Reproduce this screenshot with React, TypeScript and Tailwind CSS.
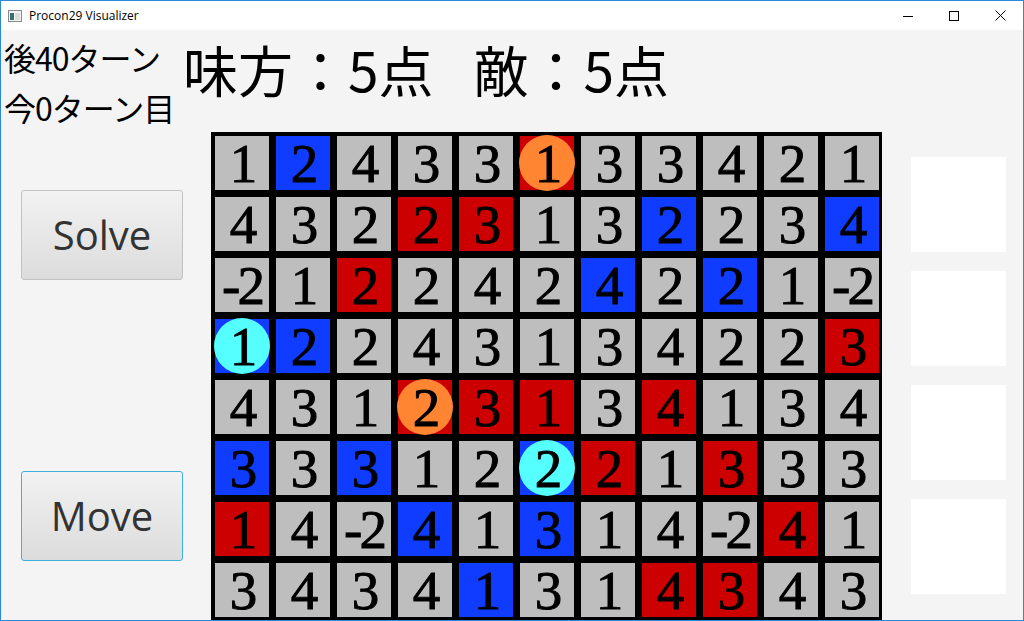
import React from "react";

const rows = [
  "1g 2b 4g 3g 3g 1r:o 3g 3g 4g 2g 1g",
  "4g 3g 2g 2r 3r 1g 3g 2b 2g 3g 4b",
  "-2g 1g 2r 2g 4g 2g 4b 2g 2b 1g -2g",
  "1b:c 2b 2g 4g 3g 1g 3g 4g 2g 2g 3r",
  "4g 3g 1g 2r:o 3r 1r 3g 4r 1g 3g 4g",
  "3b 3g 3b 1g 2g 2b:c 2r 1g 3r 3g 3g",
  "1r 4g -2g 4b 1g 3b 1g 4g -2g 4r 1g",
  "3g 4g 3g 4g 1b 3g 1g 4r 3r 4g 3g",
];

type Cell = { v: string; c: string; agent?: string };

const grid: Cell[][] = rows.map((r) =>
  r.split(" ").map((tok) => {
    const [main, agent] = tok.split(":");
    return { v: main.slice(0, -1), c: main.slice(-1), agent };
  })
);

function CellView({ cell }: { cell: Cell }) {
  const bg =
    cell.c === "b" ? "bg-[#0f3cff]" : cell.c === "r" ? "bg-[#cc0000]" : "bg-[#bebebe]";
  return (
    <div className={`relative w-[54px] h-[54px] ${bg} flex items-center justify-center`}>
      {cell.agent === "o" && (
        <div className="absolute -inset-px rounded-full bg-[#ff8533]" />
      )}
      {cell.agent === "c" && (
        <div className="absolute -inset-px rounded-full bg-[#55ffff]" />
      )}
      <span
        className="relative text-black text-[55px] leading-none tracking-[-3px] [-webkit-text-stroke:0.9px_black]"
        style={{ fontFamily: '"Liberation Serif", "DejaVu Serif", serif' }}
      >
        {cell.v}
      </span>
    </div>
  );
}

export default function App() {
  return (
    <div
      className="w-[1024px] h-[621px] bg-[#f4f4f4] border border-[#2a8ad8] overflow-hidden flex flex-col box-border"
      style={{ fontFamily: '"Noto Sans", "Noto Sans CJK JP", sans-serif' }}
    >
      {/* Title bar */}
      <div className="h-[29px] bg-white flex items-center shrink-0">
        <svg width="14" height="12" viewBox="0 0 14 12" className="ml-[7px] mt-[1px]">
          <rect x="0.5" y="0.5" width="13" height="11" fill="#f2f2f2" stroke="#8a8a8a" />
          <rect x="2" y="3" width="4" height="7" fill="#3c6e6a" />
          <rect x="7" y="3" width="5" height="7" fill="#dcdcdc" />
        </svg>
        <span
          className="ml-[7px] text-[12px] text-black"
          style={{ fontFamily: '"Open Sans", "Noto Sans", sans-serif' }}
        >
          Procon29 Visualizer
        </span>
        <div className="ml-auto flex items-center h-full">
          <div className="w-[46px] h-full flex items-center justify-center">
            <svg width="10" height="10" viewBox="0 0 10 10">
              <line x1="0" y1="5.5" x2="10" y2="5.5" stroke="#000" strokeWidth="1" />
            </svg>
          </div>
          <div className="w-[46px] h-full flex items-center justify-center">
            <svg width="10" height="10" viewBox="0 0 10 10">
              <rect x="0.5" y="0.5" width="9" height="9" fill="none" stroke="#000" strokeWidth="1" />
            </svg>
          </div>
          <div className="w-[46px] h-full flex items-center justify-center">
            <svg width="11" height="11" viewBox="0 0 11 11">
              <line x1="0.5" y1="0.5" x2="10.5" y2="10.5" stroke="#000" strokeWidth="1" />
              <line x1="10.5" y1="0.5" x2="0.5" y2="10.5" stroke="#000" strokeWidth="1" />
            </svg>
          </div>
        </div>
      </div>

      {/* Top text row */}
      <div className="h-[102px] flex shrink-0">
        <div
          className="w-[182px] pl-[3px] pt-[2px] text-[32px] leading-[50px] tracking-[-1px] text-black whitespace-nowrap"
          style={{ fontFamily: '"Noto Sans CJK JP", sans-serif' }}
        >
          <div>後40ターン</div>
          <div>今0ターン目</div>
        </div>
        <div
          className="pt-[8px] flex gap-[40px] text-[55px] leading-[60px] text-black whitespace-nowrap"
          style={{ fontFamily: '"Noto Sans CJK JP", sans-serif' }}
        >
          <span>味方：5点</span>
          <span>敵：5点</span>
        </div>
      </div>

      {/* Main row */}
      <div className="flex flex-1">
        <div className="w-[210px] pl-[20px] flex flex-col shrink-0">
          <button
            className="mt-[58px] w-[162px] h-[90px] rounded-[3px] border border-[#c2c2c2] bg-gradient-to-b from-[#f2f2f2] to-[#dcdcdc] text-[#333333] text-[40px] leading-none"
            style={{ fontFamily: '"Open Sans", "Noto Sans", sans-serif' }}
          >
            Solve
          </button>
          <button
            className="mt-[191px] w-[162px] h-[90px] rounded-[3px] border border-[#3fb0e0] bg-gradient-to-b from-[#f2f2f2] to-[#dcdcdc] text-[#333333] text-[40px] leading-none"
            style={{ fontFamily: '"Open Sans", "Noto Sans", sans-serif' }}
          >
            Move
          </button>
        </div>

        <div className="bg-black pl-[4px] pt-[4px] pr-[3px] pb-[3px] self-start shrink-0">
          <div className="grid grid-cols-[repeat(11,54px)] gap-[7px]">
            {grid.flatMap((row, i) =>
              row.map((cell, j) => <CellView key={`${i}-${j}`} cell={cell} />)
            )}
          </div>
        </div>

        <div className="ml-[29px] pt-[25px] flex flex-col gap-[19px]">
          <div className="w-[95px] h-[95px] bg-white" />
          <div className="w-[95px] h-[95px] bg-white" />
          <div className="w-[95px] h-[95px] bg-white" />
          <div className="w-[95px] h-[95px] bg-white" />
        </div>
      </div>
    </div>
  );
}
